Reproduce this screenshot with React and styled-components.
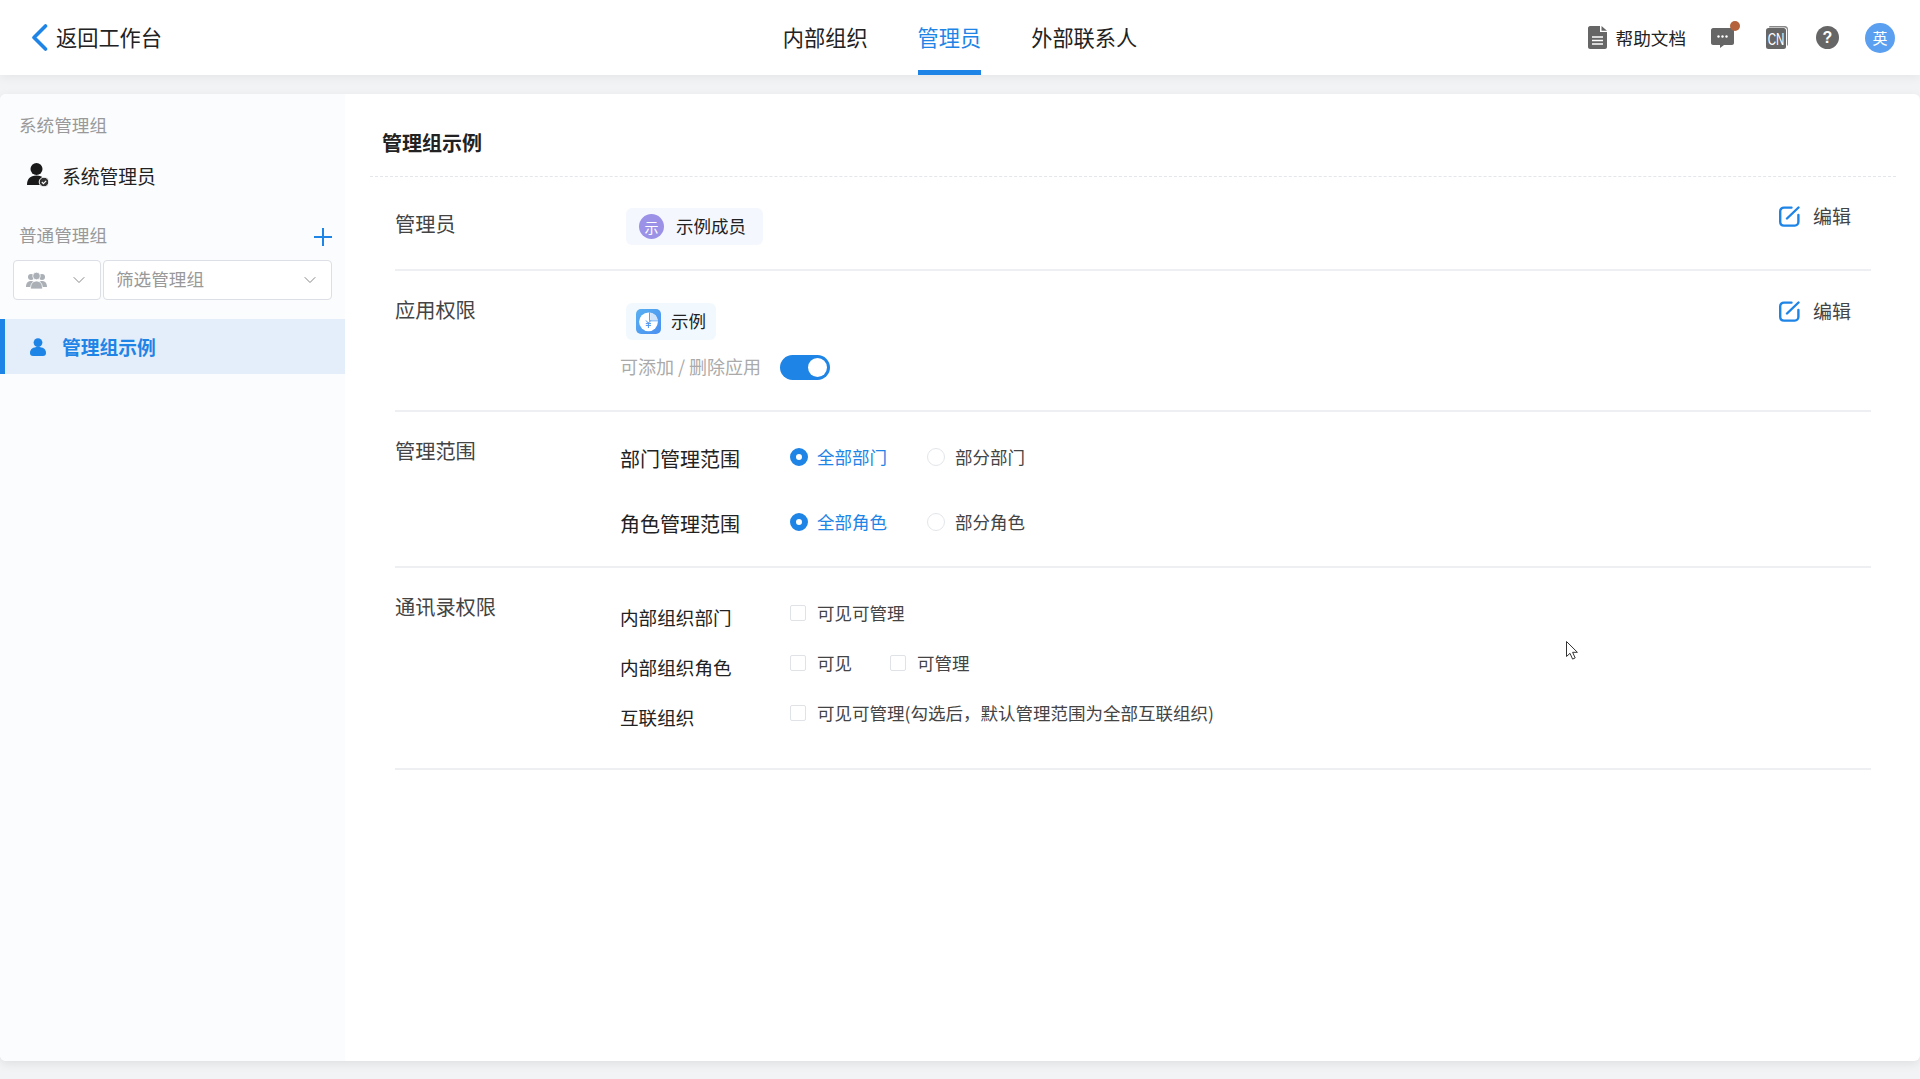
import React from "react";
import styled, { createGlobalStyle } from "styled-components";
import { ChevronDown } from "lucide-react";

const GlobalStyle = createGlobalStyle`
  html, body { margin: 0; padding: 0; height: 100%; }
  body {
    background: #f2f3f5;
    color: #222;
    font-family: "Noto Sans CJK SC", "Noto Sans", sans-serif;
    overflow: hidden;
  }
  * { box-sizing: border-box; }
`;

const Page = styled.div`
  position: relative;
  height: 1079px;
  display: flex;
  flex-direction: column;
`;

const Header = styled.header`
  height: 75px;
  flex: none;
  background: #fff;
  box-shadow: 0 2px 10px rgba(0, 0, 0, 0.06);
  display: grid;
  grid-template-columns: 1fr auto 1fr;
  align-items: center;
  padding: 0 25px;
`;

const BackLink = styled.a`
  display: flex;
  align-items: center;
  gap: 8px;
  margin-left: 6px;
  padding-bottom: 2px;
  font-size: 21.2px;
  color: #222;
  svg { margin-top: 2px; }
`;

const Nav = styled.nav`
  display: flex;
  gap: 50px;
  height: 75px;
`;

const NavItem = styled.a`
  font-size: 21.2px;
  line-height: 73px;
  height: 75px;
  color: ${(p) => (p.$active ? "#1e84e6" : "#222")};
  border-bottom: 5px solid ${(p) => (p.$active ? "#1e84e6" : "transparent")};
`;

const Tools = styled.div`
  display: flex;
  align-items: center;
  justify-content: flex-end;
`;

const HelpLink = styled.a`
  display: flex;
  align-items: center;
  gap: 9px;
  font-size: 17.6px;
  color: #222;
  margin-right: 25px;
`;

const ToolIcon = styled.span`
  position: relative;
  display: flex;
  margin-right: ${(p) => p.$gap}px;
  margin-top: ${(p) => p.$top || 0}px;
`;

const Dot = styled.i`
  position: absolute;
  top: -7px;
  right: -6px;
  width: 10px;
  height: 10px;
  border-radius: 50%;
  background: #b5623c;
`;

const UserBadge = styled.span`
  width: 30px;
  height: 30px;
  border-radius: 50%;
  background: #5b9ff0;
  color: #fff;
  font-size: 15px;
  display: flex;
  align-items: center;
  justify-content: center;
`;

const Card = styled.div`
  margin-top: 19px;
  height: 967px;
  display: flex;
  background: #fff;
  border-radius: 6px;
  overflow: hidden;
  box-shadow: 0 3px 10px rgba(0, 0, 0, 0.08);
`;

const Sidebar = styled.aside`
  width: 345px;
  flex: none;
  background: #fbfcfe;
`;

const GroupTitle = styled.div`
  display: flex;
  align-items: center;
  justify-content: space-between;
  font-size: 17.6px;
  line-height: 26px;
  color: #999;
  padding: ${(p) => p.$top}px 13px 0 19px;
`;

const AddButton = styled.span`
  display: flex;
  margin-top: 3px;
`;

const SideItem = styled.div`
  display: flex;
  align-items: center;
  font-size: 18.8px;
  height: ${(p) => p.$height}px;
  margin-top: ${(p) => p.$top}px;
  padding-left: ${(p) => (p.$active ? 25 : 27)}px;
  color: ${(p) => (p.$active ? "#1e84e6" : "#222")};
  font-weight: ${(p) => (p.$active ? 700 : 400)};
  background: ${(p) => (p.$active ? "#e4eefb" : "transparent")};
  border-left: ${(p) => (p.$active ? "5px solid #1e84e6" : "none")};
`;

const SideIcon = styled.span`
  display: flex;
  width: ${(p) => p.$width}px;
  flex: none;
`;

const Filters = styled.div`
  display: flex;
  gap: 2px;
  padding: 0 13px;
  margin-top: 12px;
`;

const FilterBox = styled.div`
  height: 40px;
  width: ${(p) => p.$width}px;
  flex: none;
  background: #fff;
  border: 1px solid #dcdfe6;
  border-radius: 4px;
  display: flex;
  align-items: center;
  justify-content: space-between;
  padding: 0 11px 4px 12px;
  font-size: 17.6px;
  color: #999;
  svg { margin-top: 4px; }
  svg.chev { color: #888; }
`;

const Main = styled.main`
  flex: 1;
  padding: 0 24px 0 25px;
`;

const MainTitle = styled.h2`
  margin: 0;
  height: 83px;
  padding: 35px 0 0 12px;
  font-size: 20px;
  line-height: 28px;
  font-weight: 700;
  color: #222;
  border-bottom: 1px dashed #e3e6ea;
`;

const Rows = styled.div`
  padding: 0 25px;
`;

const Row = styled.section`
  display: grid;
  grid-template-columns: 225px 1fr auto;
  align-items: start;
  height: ${(p) => p.$height}px;
  padding-top: 25px;
  border-bottom: 2px solid #edeff3;
`;

const RowLabel = styled.div`
  font-size: 20.2px;
  line-height: 28px;
  color: #444;
  margin-top: ${(p) => p.$top || 0}px;
`;

const Chip = styled.div`
  display: inline-flex;
  align-items: center;
  height: 37px;
  margin: ${(p) => p.$top}px 0 0 6px;
  padding: ${(p) => p.$padding};
  gap: ${(p) => p.$gap}px;
  border-radius: 6px;
  background: ${(p) => p.$tint};
  font-size: 17.5px;
  color: #222;
`;

const ChipText = styled.span`
  margin-bottom: 2px;
`;

const MemberAvatar = styled.span`
  width: 25px;
  height: 25px;
  border-radius: 50%;
  background: #9b92e8;
  color: #fff;
  font-size: 14px;
  display: flex;
  align-items: center;
  justify-content: center;
`;

const AppLine = styled.div`
  display: flex;
  align-items: center;
  gap: 19px;
  margin-top: 13px;
  font-size: 18px;
  line-height: 25px;
  color: #aaa;
`;

const Toggle = styled.span`
  position: relative;
  width: 50px;
  height: 25px;
  margin-top: 2px;
  border-radius: 13px;
  background: #1e84e6;
  &::after {
    content: "";
    position: absolute;
    right: 3px;
    top: 3px;
    width: 19px;
    height: 19px;
    border-radius: 50%;
    background: #fff;
  }
`;

const EditButton = styled.a`
  display: flex;
  align-items: center;
  gap: 13px;
  font-size: 19px;
  line-height: 28px;
  color: #444;
  padding-right: 20px;
  margin-top: ${(p) => p.$top}px;
`;

const SubRow = styled.div`
  display: flex;
  align-items: flex-start;
  height: ${(p) => p.$height}px;
  margin-top: ${(p) => p.$top || 0}px;
`;

const SubLabel = styled.div`
  width: 170px;
  flex: none;
  font-size: ${(p) => p.$size}px;
  line-height: 28px;
  color: #222;
`;

const Options = styled.div`
  display: flex;
  align-items: center;
  margin-top: ${(p) => p.$shift}px;
  height: 28px;
`;

const Option = styled.label`
  display: flex;
  align-items: center;
  gap: ${(p) => p.$gap}px;
  width: ${(p) => p.$width || "auto"};
  font-size: 17.5px;
  color: ${(p) => (p.$on ? "#1e84e6" : "#444")};
  white-space: nowrap;
`;

const OptionText = styled.span`
  margin-bottom: 1px;
`;

const Radio = styled.span`
  width: 18px;
  height: 18px;
  border-radius: 50%;
  flex: none;
  background: #fff;
  border: ${(p) => (p.$on ? "6px solid #1e84e6" : "1px solid #e3e6ea")};
`;

const Check = styled.span`
  width: 16px;
  height: 16px;
  flex: none;
  margin-top: 2px;
  border-radius: 2px;
  background: #fff;
  border: 1px solid #dfe2e7;
`;

const Cursor = styled.svg`
  position: absolute;
  left: 1565px;
  top: 640px;
`;

function BackIcon() {
  return (
    <svg width="17" height="27" viewBox="0 0 17 27" fill="none">
      <path d="M14.5 2L3 13.5 14.5 25" stroke="#1e84e6" strokeWidth="3.6" strokeLinecap="round" strokeLinejoin="round" />
    </svg>
  );
}

function UserCheckIcon() {
  return (
    <svg width="22" height="24" viewBox="0 0 22 24">
      <circle cx="9.5" cy="6" r="6" fill="#1a1a1a" />
      <path d="M0 22c0-6 3-9.5 9.5-9.5S19 16 19 22H0z" fill="#1a1a1a" />
      <circle cx="17" cy="19" r="4.8" fill="#333" stroke="#fbfcfe" strokeWidth="1" />
      <path d="M14.8 19l1.6 1.6 2.8-2.8" stroke="#fff" strokeWidth="1.1" fill="none" />
    </svg>
  );
}

function UserIcon() {
  return (
    <svg width="16" height="18" viewBox="0 0 16 18">
      <circle cx="8" cy="4.6" r="4.4" fill="#1e84e6" />
      <path d="M0 15c0-4 3-6 8-6s8 2 8 6c0 2-1 3-3 3H3c-2 0-3-1-3-3z" fill="#1e84e6" />
    </svg>
  );
}

function GroupIcon() {
  return (
    <svg width="21" height="17" viewBox="0 0 21 17" fill="#aab0b6">
      <circle cx="5" cy="5" r="3" />
      <circle cx="16" cy="5" r="3" />
      <path d="M0 15c0-4 2-6 5-6s4 2 4 6H0zM12 15c0-4 1-6 4-6s5 2 5 6h-9z" />
      <circle cx="10.5" cy="4" r="3.8" stroke="#fff" strokeWidth="0.8" />
      <path d="M4.5 17c0-5 2-8 6-8s6 3 6 8h-12z" stroke="#fff" strokeWidth="0.8" />
    </svg>
  );
}

function PlusIcon() {
  return (
    <svg width="18" height="18" viewBox="0 0 18 18">
      <path d="M9 0v18M0 9h18" stroke="#1e84e6" strokeWidth="2" />
    </svg>
  );
}

function EditIcon() {
  return (
    <svg width="21" height="21" viewBox="0 0 21 21" fill="none" stroke="#1e84e6" strokeWidth="2.4">
      <path d="M12.5 1.6H5C2.8 1.6 1.2 3.2 1.2 5.2v10.6c0 2.2 1.6 3.8 3.8 3.8h10.8c2 0 3.6-1.6 3.6-3.8V9" strokeLinecap="round" />
      <path d="M8 12.5L19.5 1.5" strokeLinecap="round" />
    </svg>
  );
}

function DocIcon() {
  return (
    <svg width="19" height="23" viewBox="0 0 19 23">
      <path d="M2 0h10v6h7v15c0 1-1 2-2 2H2c-1 0-2-1-2-2V2c0-1 1-2 2-2z" fill="#666" />
      <path d="M13.5 0L19 4.8h-5.5z" fill="#666" />
      <path d="M4 11h11M4 14.5h11M4 18h11" stroke="#fff" strokeWidth="1.5" />
    </svg>
  );
}

function MessageIcon() {
  return (
    <svg width="23" height="20" viewBox="0 0 23 20">
      <path d="M2 0h19c1 0 2 1 2 2v13c0 1-1 2-2 2h-8l-4 3v-3H2c-1 0-2-1-2-2V2c0-1 1-2 2-2z" fill="#666" />
      <circle cx="7.5" cy="8.5" r="1.2" fill="#fff" />
      <circle cx="11.5" cy="8.5" r="1.2" fill="#fff" />
      <circle cx="15.5" cy="8.5" r="1.2" fill="#fff" />
    </svg>
  );
}

function LangIcon() {
  return (
    <svg width="22" height="23" viewBox="0 0 22 23">
      <path d="M4 0h15c1.6 0 3 1.4 3 3v15c0 1-.5 1.6-1 2V4c0-1.6-1-2.6-2.6-2.6H3C3 .6 3.4 0 4 0z" fill="#888" />
      <rect x="0" y="2" width="20" height="21" rx="2.5" fill="#666" />
      <text transform="translate(1.8 18.5) scale(0.72 1)" fontSize="16" fill="#fff" fontFamily="Liberation Sans, sans-serif">CN</text>
    </svg>
  );
}

function QuestionIcon() {
  return (
    <svg width="23" height="23" viewBox="0 0 23 23">
      <circle cx="11.5" cy="11.5" r="11.5" fill="#666" />
      <text x="11.5" y="17" fontSize="16" fontWeight="700" fill="#fff" textAnchor="middle" fontFamily="Liberation Sans, sans-serif">?</text>
    </svg>
  );
}

function AppIcon() {
  return (
    <svg width="25" height="25" viewBox="0 0 25 25">
      <defs>
        <linearGradient id="appFill" x1="0" y1="0" x2="1" y2="1">
          <stop offset="0" stopColor="#58b0f2" />
          <stop offset="1" stopColor="#4a8ff0" />
        </linearGradient>
      </defs>
      <rect width="25" height="25" rx="5" fill="url(#appFill)" />
      <circle cx="12.5" cy="12.8" r="9.4" fill="#fff" />
      <path d="M13.5 3.6l0 8.2 8.2 0" fill="none" stroke="#5aa4f2" strokeWidth="1" />
      <path d="M14.2 3.6a9.4 9.4 0 0 1 7.6 7.6h-7.6z" fill="#cfe4fb" />
      <path d="M10 11.5l2.4 2.6 2.4-2.6M9.8 14.4h5.2M9.8 16.4h5.2M12.4 14v5" stroke="#4a94ef" strokeWidth="1" fill="none" />
    </svg>
  );
}

export default function App() {
  return (
    <Page>
      <GlobalStyle />
      <Header>
        <BackLink>
          <BackIcon />
          返回工作台
        </BackLink>
        <Nav>
          <NavItem>内部组织</NavItem>
          <NavItem $active>管理员</NavItem>
          <NavItem>外部联系人</NavItem>
        </Nav>
        <Tools>
          <HelpLink>
            <DocIcon />
            帮助文档
          </HelpLink>
          <ToolIcon $gap={32} $top={1}>
            <MessageIcon />
            <Dot />
          </ToolIcon>
          <ToolIcon $gap={28}>
            <LangIcon />
          </ToolIcon>
          <ToolIcon $gap={26}>
            <QuestionIcon />
          </ToolIcon>
          <UserBadge>英</UserBadge>
        </Tools>
      </Header>

      <Card>
        <Sidebar>
          <GroupTitle $top={18}>系统管理组</GroupTitle>
          <SideItem $height={40} $top={17}>
            <SideIcon $width={35}>
              <UserCheckIcon />
            </SideIcon>
            系统管理员
          </SideItem>
          <GroupTitle $top={27}>
            普通管理组
            <AddButton>
              <PlusIcon />
            </AddButton>
          </GroupTitle>
          <Filters>
            <FilterBox $width={88}>
              <GroupIcon />
              <ChevronDown className="chev" size={20} strokeWidth={1.2} />
            </FilterBox>
            <FilterBox $width={229}>
              筛选管理组
              <ChevronDown className="chev" size={20} strokeWidth={1.2} />
            </FilterBox>
          </Filters>
          <SideItem $active $height={55} $top={19}>
            <SideIcon $width={32}>
              <UserIcon />
            </SideIcon>
            管理组示例
          </SideItem>
        </Sidebar>

        <Main>
          <MainTitle>管理组示例</MainTitle>
          <Rows>
            <Row $height={94}>
              <RowLabel $top={8}>管理员</RowLabel>
              <div>
                <Chip $top={6} $padding="0 17px 0 13px" $gap={12} $tint="#f4f7fe">
                  <MemberAvatar>示</MemberAvatar>
                  <ChipText>示例成员</ChipText>
                </Chip>
              </div>
              <EditButton $top={0}>
                <EditIcon />
                编辑
              </EditButton>
            </Row>
            <Row $height={141}>
              <RowLabel>应用权限</RowLabel>
              <div>
                <Chip $top={7} $padding="0 10px" $gap={10} $tint="#f2f9fe">
                  <AppIcon />
                  <ChipText>示例</ChipText>
                </Chip>
                <AppLine>
                  可添加 / 删除应用
                  <Toggle />
                </AppLine>
              </div>
              <EditButton $top={1}>
                <EditIcon />
                编辑
              </EditButton>
            </Row>
            <Row $height={156}>
              <RowLabel>管理范围</RowLabel>
              <div>
                <SubRow $height={65} $top={8}>
                  <SubLabel $size={20}>部门管理范围</SubLabel>
                  <Options $shift={-2}>
                    <Option $on $gap={9} $width="137px">
                      <Radio $on />
                      <OptionText>全部部门</OptionText>
                    </Option>
                    <Option $gap={10}>
                      <Radio />
                      <OptionText>部分部门</OptionText>
                    </Option>
                  </Options>
                </SubRow>
                <SubRow $height={65}>
                  <SubLabel $size={20}>角色管理范围</SubLabel>
                  <Options $shift={-2}>
                    <Option $on $gap={9} $width="137px">
                      <Radio $on />
                      <OptionText>全部角色</OptionText>
                    </Option>
                    <Option $gap={10}>
                      <Radio />
                      <OptionText>部分角色</OptionText>
                    </Option>
                  </Options>
                </SubRow>
              </div>
            </Row>
            <Row $height={202}>
              <RowLabel>通讯录权限</RowLabel>
              <div>
                <SubRow $height={50} $top={10}>
                  <SubLabel $size={18.6}>内部组织部门</SubLabel>
                  <Options $shift={-5}>
                    <Option $gap={11}>
                      <Check />
                      可见可管理
                    </Option>
                  </Options>
                </SubRow>
                <SubRow $height={50}>
                  <SubLabel $size={18.6}>内部组织角色</SubLabel>
                  <Options $shift={-5}>
                    <Option $gap={11} $width="100px">
                      <Check />
                      可见
                    </Option>
                    <Option $gap={11}>
                      <Check />
                      可管理
                    </Option>
                  </Options>
                </SubRow>
                <SubRow $height={50}>
                  <SubLabel $size={18.6}>互联组织</SubLabel>
                  <Options $shift={-5}>
                    <Option $gap={11}>
                      <Check />
                      可见可管理(勾选后，默认管理范围为全部互联组织)
                    </Option>
                  </Options>
                </SubRow>
              </div>
            </Row>
          </Rows>
        </Main>
      </Card>

      <Cursor width="14" height="21" viewBox="0 0 14 21">
        <path d="M1.5 1.5v15l3.5-3.2 2.6 5.8 2.6-1.2-2.6-5.6h4.8z" fill="#fff" stroke="#333" strokeWidth="1" />
      </Cursor>
    </Page>
  );
}
